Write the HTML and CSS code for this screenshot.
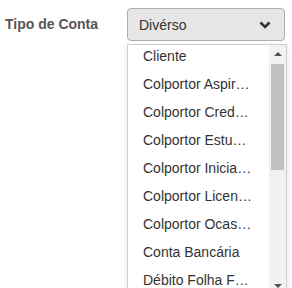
FILE: index.html
```html
<!DOCTYPE html>
<html lang="pt">
  <head>
    <meta charset="UTF-8" />
    <meta name="viewport" content="width=device-width, initial-scale=1.0" />
    <title>Tipo de Conta</title>
    <link rel="stylesheet" href="styles.css">
  </head>
  <body>
    <div class="field">
      <label class="label">Tipo de Conta</label>
      <div class="select">
        <div class="select-box">
          <span class="value">Divérso</span>
          <svg class="chevron" width="12" height="8" viewBox="0 0 12 8">
            <path d="M1.5 1.5 L6 6 L10.5 1.5" fill="none" stroke="#333" stroke-width="2.6" />
          </svg>
        </div>
        <div class="dropdown">
          <div class="options">
            <div class="list">
              <div class="option">Cliente</div>
              <div class="option">Colportor Aspir…</div>
              <div class="option">Colportor Cred…</div>
              <div class="option">Colportor Estu…</div>
              <div class="option">Colportor Inicia…</div>
              <div class="option">Colportor Licen…</div>
              <div class="option">Colportor Ocas…</div>
              <div class="option">Conta Bancária</div>
              <div class="option">Débito Folha F…</div>
            </div>
          </div>
          <div class="scrollbar">
            <div class="arrow up"></div>
            <div class="track">
              <div class="thumb"></div>
            </div>
            <div class="arrow down"></div>
          </div>
        </div>
      </div>
    </div>
  </body>
</html>
```

FILE: styles.css
```css
* {
  margin: 0;
  padding: 0;
  box-sizing: border-box;
}

body {
  width: 292px;
  height: 288px;
  overflow: hidden;
  background-color: #fff;
  font-family: 'Liberation Sans', Arial, sans-serif;
  font-size: 14px;
  color: #333;
}

.field {
  display: flex;
  align-items: flex-start;
  padding: 8px 0 0 5px;
}

.label {
  width: 122px;
  padding-top: 8px;
  font-weight: bold;
  color: #555;
}

.select {
  position: relative;
  width: 160px;
}

.select-box {
  display: flex;
  align-items: center;
  justify-content: space-between;
  width: 158px;
  height: 33px;
  padding: 0 13px 0 11px;
  border: 1px solid #adadad;
  border-radius: 4px;
  background-color: #e6e6e6;
}

.value {
  color: #333;
}

.chevron {
  display: block;
}

.dropdown {
  position: absolute;
  top: 36px;
  left: 0;
  width: 160px;
  height: 250px;
  display: flex;
  border: 1px solid #cfcfcf;
  border-bottom: none;
  background-color: #fff;
  box-shadow: 0 2px 6px rgba(0, 0, 0, 0.12);
}

.options {
  flex: 1;
  overflow: hidden;
}

.list {
  margin-top: -3px;
}

.option {
  height: 28px;
  line-height: 28px;
  padding-left: 15px;
  white-space: nowrap;
  color: #333;
}

.scrollbar {
  width: 17px;
  display: flex;
  flex-direction: column;
  background-color: #f1f1f1;
}

.arrow {
  height: 17px;
  display: flex;
  align-items: center;
  justify-content: center;
}

.arrow::before {
  content: '';
  width: 0;
  height: 0;
  border-left: 4px solid transparent;
  border-right: 4px solid transparent;
}

.arrow.up::before {
  border-bottom: 4px solid #505050;
}

.arrow.down::before {
  border-top: 4px solid #505050;
}

.track {
  flex: 1;
  padding: 2px 2px 0;
}

.thumb {
  height: 106px;
  background-color: #c1c1c1;
}
```
